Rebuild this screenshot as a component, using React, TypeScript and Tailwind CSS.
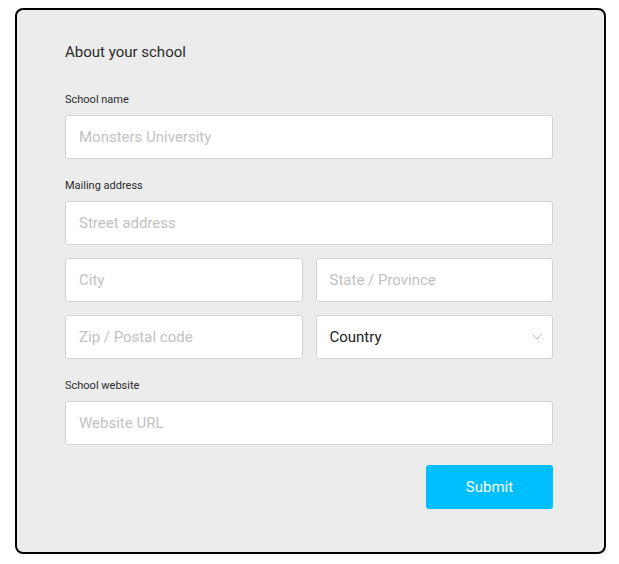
import React from "react";

const inputCls =
  "h-[44px] w-full rounded-[3px] border border-[#d4d4d4] bg-white px-[13px] text-[15px] text-[#333] placeholder:text-[#c2c2c2] outline-none";

function Label({ children, className = "" }: { children: React.ReactNode; className?: string }) {
  return <div className={`text-[11px] leading-[14px] text-[#2a2a2a] mb-[8px] ${className}`}>{children}</div>;
}

export default function App() {
  return (
    <div className="min-h-screen bg-white pt-[8px] pl-[15px]" style={{ fontFamily: "Roboto, 'Liberation Sans', sans-serif" }}>
      <div className="w-[591px] h-[546px] rounded-[8px] border-2 border-black bg-[#ececec] pt-[32px] pl-[48px] pr-[51px]">
        <div className="text-[15px] leading-[20px] text-[#2a2a2a] mb-[31px]">About your school</div>

        <Label>School name</Label>
        <input className={inputCls} placeholder="Monsters University" />

        <Label className="mt-[20px]">Mailing address</Label>
        <input className={inputCls} placeholder="Street address" />
        <div className="mt-[13px] grid grid-cols-2 gap-[13px]">
          <input className={inputCls} placeholder="City" />
          <input className={inputCls} placeholder="State / Province" />
          <input className={inputCls} placeholder="Zip / Postal code" />
          <div className="relative h-[44px] rounded-[3px] border border-[#d4d4d4] bg-white px-[13px] pt-[1px] flex items-center text-[15px] text-[#222]">
            Country
            <svg className="absolute right-[10px] top-1/2 -translate-y-1/2" width="10" height="6" viewBox="0 0 10 6" fill="none">
              <path d="M0.5 0.5 L5 5 L9.5 0.5" stroke="#bcbcbc" strokeWidth="1" />
            </svg>
          </div>
        </div>

        <Label className="mt-[20px]">School website</Label>
        <input className={inputCls} placeholder="Website URL" />

        <div className="mt-[20px] flex justify-end">
          <button className="h-[44px] w-[127px] rounded-[3px] bg-[#00bfff] text-[15px] text-white">Submit</button>
        </div>
      </div>
    </div>
  );
}
